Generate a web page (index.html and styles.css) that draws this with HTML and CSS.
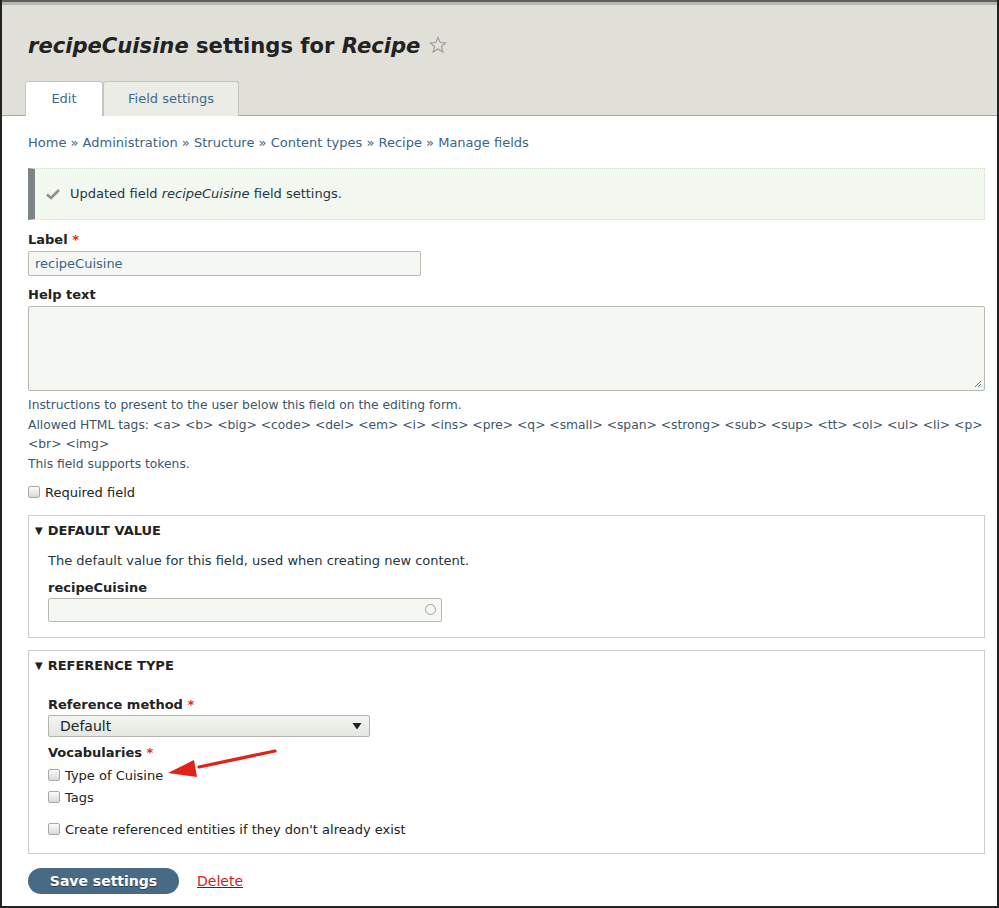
FILE: index.html
```html
<!DOCTYPE html>
<html>
<head>
<meta charset="utf-8">
<link rel="stylesheet" href="styles.css">
</head>
<body>
<div class="frame">
  <header class="header">
    <h1 class="title"><em>recipeCuisine</em> settings for <em>Recipe</em>
      <svg class="star" width="18" height="18" viewBox="0 0 20 20"><polygon points="10,1.5 12.4,7.3 18.6,7.7 13.8,11.7 15.4,17.8 10,14.4 4.6,17.8 6.2,11.7 1.4,7.7 7.6,7.3" fill="none" stroke="#9a9a96" stroke-width="1.2"/></svg>
    </h1>
    <nav class="tabs">
      <a class="tab active">Edit</a>
      <a class="tab">Field settings</a>
    </nav>
  </header>
  <main class="content">
    <div class="breadcrumb">Home » Administration » Structure » Content types » Recipe » Manage fields</div>
    <div class="message">
      <svg class="check" width="14" height="12" viewBox="0 0 14 12"><path d="M1 6.5 L5 10 L13 2" fill="none" stroke="#8a8f8c" stroke-width="2.6"/></svg>
      <span>Updated field <em>recipeCuisine</em> field settings.</span>
    </div>

    <div class="form-item">
      <label class="label">Label <span class="req">*</span></label>
      <div class="input w-label"><span class="val">recipeCuisine</span></div>
    </div>
    <div class="form-item help">
      <label class="label">Help text</label>
      <div class="textarea">
        <svg class="grip" width="8" height="8" viewBox="0 0 8 8"><path d="M7 1 L1 7 M7 4 L4 7 M7 6.5 L6.5 7" stroke="#55738a" stroke-width="1"/></svg>
      </div>
      <div class="desc">
        <div>Instructions to present to the user below this field on the editing form.</div>
        <div>Allowed HTML tags: &lt;a&gt; &lt;b&gt; &lt;big&gt; &lt;code&gt; &lt;del&gt; &lt;em&gt; &lt;i&gt; &lt;ins&gt; &lt;pre&gt; &lt;q&gt; &lt;small&gt; &lt;span&gt; &lt;strong&gt; &lt;sub&gt; &lt;sup&gt; &lt;tt&gt; &lt;ol&gt; &lt;ul&gt; &lt;li&gt; &lt;p&gt; &lt;br&gt; &lt;img&gt;</div>
        <div>This field supports tokens.</div>
      </div>
    </div>
    <div class="check-row required"><span class="cb"></span>Required field</div>

    <section class="fieldset fs1">
      <div class="legend"><span class="tri">▼</span>DEFAULT VALUE</div>
      <div class="fs-body">
        <div class="fs-desc">The default value for this field, used when creating new content.</div>
        <label class="label dv-label">recipeCuisine</label>
        <div class="input w-dv auto"><span class="throbber"></span></div>
      </div>
    </section>

    <section class="fieldset fs2">
      <div class="legend"><span class="tri">▼</span>REFERENCE TYPE</div>
      <div class="fs-body">
        <label class="label rm-label">Reference method <span class="req">*</span></label>
        <div class="select"><span>Default</span><svg width="10" height="8" viewBox="0 0 10 8"><polygon points="0.5,1 9.5,1 5,7.5" fill="#222"/></svg></div>
        <label class="label voc-label">Vocabularies <span class="req">*</span></label>
        <div class="check-row voc first"><span class="cb"></span>Type of Cuisine</div>
        <div class="check-row voc"><span class="cb"></span>Tags</div>
        <div class="check-row create"><span class="cb"></span>Create referenced entities if they don't already exist</div>
      </div>
      <svg class="arrow" width="120" height="40" viewBox="0 0 120 40"><path d="M116 3 L40 19" stroke="#e02218" stroke-width="3.2" stroke-linecap="round"/><polygon points="9,25 35,12 38,29" fill="#e02218"/></svg>
    </section>

    <div class="actions">
      <button class="btn">Save settings</button>
      <a class="delete">Delete</a>
    </div>
  </main>
</div>
</body>
</html>
```

FILE: styles.css
```css
* { box-sizing: border-box; }
html, body { margin: 0; padding: 0; background: #fff; }
body {
  font-family: "DejaVu Sans", sans-serif;
  font-size: 13px;
  color: #222;
}
.frame {
  width: 999px;
  height: 908px;
  border-left: 2px solid #222;
  border-right: 2px solid #222;
  border-bottom: 2px solid #222;
  overflow: hidden;
}
.header {
  height: 116px;
  background: #e0e0d8;
  border-top: 2px solid #5e5f5c;
  box-shadow: inset 0 3px 0 #b7b8b2;
  border-bottom: 1px solid #a6a7a2;
  display: flex;
  flex-direction: column;
  padding-left: 23px;
}
.title {
  margin: 29px 0 0 3px;
  font-size: 21.1px;
  line-height: 30px;
  font-weight: bold;
  color: #222;
  display: flex;
  align-items: center;
  white-space: pre;
}
.title em { font-style: italic; }
.star { margin-left: 9px; margin-top: -3px; }
.tabs {
  margin-top: auto;
  display: flex;
  margin-bottom: -1px;
}
.tab {
  height: 35px;
  display: flex;
  align-items: center;
  justify-content: center;
  color: #3f6a87;
  font-size: 13px;
  border: 1px solid #c4c5bf;
  border-bottom: none;
  border-radius: 3px 3px 0 0;
  background: #ececE6;
  padding-bottom: 2px;
}
.tab.active { width: 78px; background: #fff; }
.tab + .tab { width: 136px; }

.content { padding: 0 12px 0 26px; }
.breadcrumb {
  margin-top: 17px;
  line-height: 20px;
  color: #3a6583;
}
.message {
  margin-top: 15px;
  height: 52px;
  border: 1px dotted #cfdccb;
  border-left: 7px solid #7c8488;
  background: #f2f8f0;
  display: flex;
  align-items: center;
  padding-left: 11px;
  padding-bottom: 1px;
  color: #263440;
}
.check { margin-right: 10px; }
.label {
  display: block;
  font-weight: bold;
  line-height: 18px;
  color: #222;
}
.req { color: #e3281c; }
.form-item { margin-top: 11px; }
.input {
  margin-top: 2px;
  height: 25px;
  border: 1px solid #b8b9b3;
  border-radius: 2px;
  background: #f5f7f3;
  display: flex;
  align-items: center;
  padding: 0 6px;
}
.w-label { width: 393px; }
.val { color: #3a6583; font-size: 13px; }
.help { margin-top: 10px; }
.textarea {
  margin-top: 2px;
  height: 85px;
  border: 1px solid #b8b9b3;
  border-radius: 2px;
  background: #f5f7f3;
  display: flex;
  justify-content: flex-end;
  align-items: flex-end;
  padding: 2px;
}
.desc {
  margin-top: 5px;
  font-size: 12.3px;
  line-height: 19.7px;
  color: #3d5569;
}
.check-row {
  display: flex;
  align-items: center;
  line-height: 20px;
  color: #222;
}
.cb {
  width: 12px;
  height: 12px;
  border: 1px solid #a9aaa6;
  border-radius: 2px;
  background: linear-gradient(#fafafa, #d9d9d6);
  margin-right: 5px;
  margin-top: -2px;
}
.required { margin-top: 8px; }
.fieldset {
  border: 1px solid #ccc;
  position: relative;
}
.fs1 { margin-top: 12px; }
.fs2 { margin-top: 12px; }
.legend {
  padding: 6px 0 0 6px;
  line-height: 18px;
  font-weight: bold;
  color: #222;
}
.tri { font-size: 10px; margin-right: 5px; position: relative; top: -1px; }
.fs-body { padding: 0 19px 15px; }
.fs-desc { margin-top: 10px; line-height: 20px; color: #263440; }
.dv-label { margin-top: 8px; }
.w-dv { width: 394px; height: 24px; margin-top: 1px; justify-content: flex-end; }
.throbber {
  width: 11px;
  height: 11px;
  border: 1.5px solid #a0a09c;
  border-radius: 50%;
  margin-right: -1px;
}
.rm-label { margin-top: 20px; }
.select {
  margin-top: 1px;
  width: 322px;
  height: 22px;
  border: 1px solid #b3b4ae;
  border-radius: 2px;
  background: linear-gradient(#f3f5f1, #e4e6e0);
  display: flex;
  align-items: center;
  justify-content: space-between;
  padding: 0 7px 0 11px;
  font-size: 14px;
  color: #222;
}
.voc-label { margin-top: 7px; }
.voc { line-height: 22px; }
.voc.first { margin-top: 3px; }
.create { margin-top: 11px; }
.fs2 .fs-body { padding-bottom: 13px; }
.arrow { position: absolute; left: 130px; top: 97px; }
.actions {
  margin-top: 14px;
  display: flex;
  align-items: center;
}
.btn {
  width: 151px;
  height: 26px;
  border: none;
  border-radius: 13px;
  background: #486a84;
  color: #fff;
  font-family: "DejaVu Sans", sans-serif;
  font-weight: bold;
  font-size: 14px;
  padding: 0;
  text-shadow: 0 1px 0 #2a3e4c;
}
.delete {
  margin-left: 18px;
  font-size: 14px;
  color: #d81b1b;
  text-decoration: underline;
  text-decoration-color: #333;
}
```
